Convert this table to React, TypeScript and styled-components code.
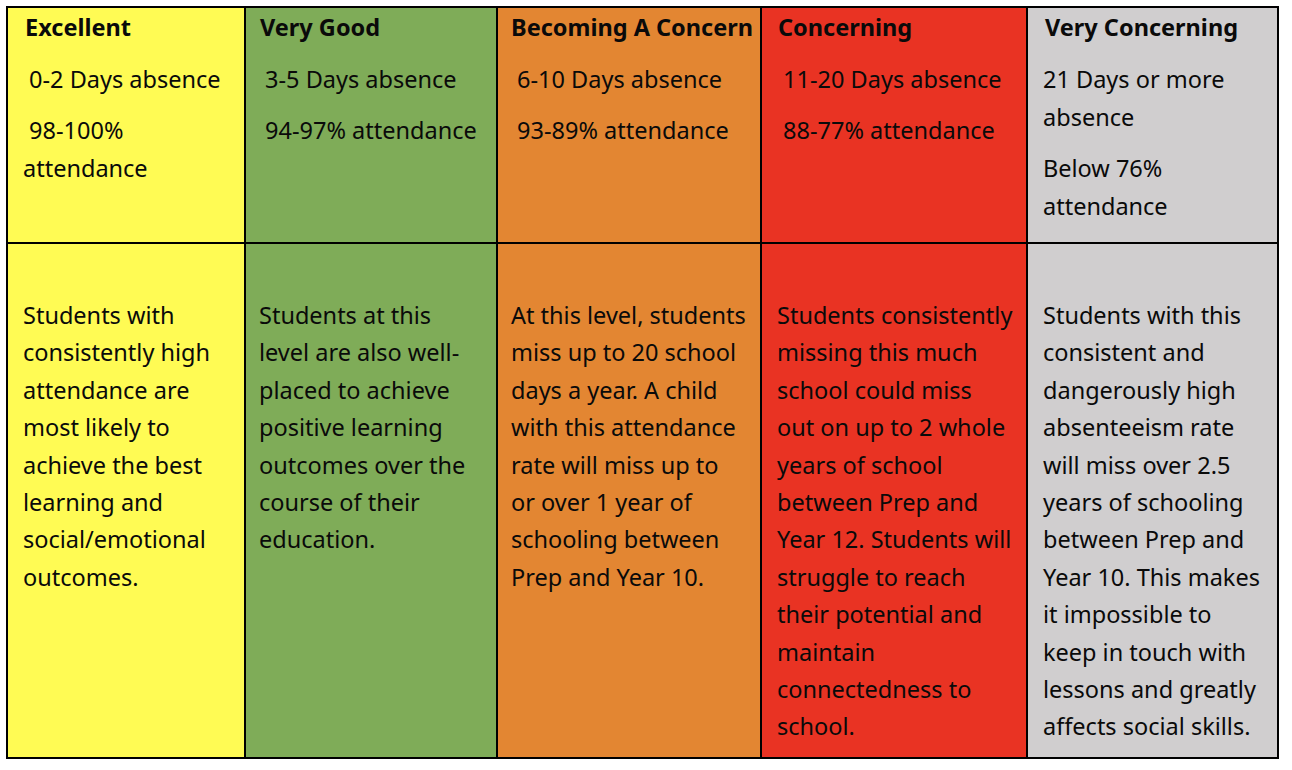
import React from "react";
import styled, { createGlobalStyle } from "styled-components";

const GlobalStyle = createGlobalStyle`
  html, body { margin: 0; padding: 0; background: #ffffff; }
  body { font-family: "Noto Sans", "Open Sans", sans-serif; color: #000; }
`;

const Page = styled.div`
  padding: 6px 0 0 6px;
`;

const Grid = styled.div`
  display: grid;
  grid-template-columns: 236px 250px 262px 264px 249px;
  grid-template-rows: 234px 513px;
  gap: 2px;
  padding: 2px;
  background: #000;
  width: max-content;
`;

const Cell = styled.div<{ $bg: string; $pad: number; $right: number; $top: number; $lh: number }>`
  background: ${(p) => p.$bg};
  padding: ${(p) => p.$top}px ${(p) => p.$right}px 0 ${(p) => p.$pad}px;
  font-size: 23.5px;
  line-height: ${(p) => p.$lh}px;
  color: #0a0a0a;
`;

const Heading = styled.div<{ $indent: number }>`
  font-weight: 700;
  padding-left: ${(p) => p.$indent}px;
  white-space: nowrap;
`;

const Para = styled.p`
  margin: 13.5px 0 0 0;
`;

const Body = styled.p`
  margin: 0;
`;

type Level = {
  title: string;
  bg: string;
  pad: number;
  right: number;
  indent: number;
  lines: string[];
  body: string;
};

const levels: Level[] = [
  {
    title: "Excellent",
    bg: "#fffb54",
    pad: 15,
    right: 4,
    indent: 2,
    lines: ["\u00a00-2 Days absence", "\u00a098-100% attendance"],
    body:
      "Students with consistently high attendance are most likely to achieve the best learning and social/emotional outcomes.",
  },
  {
    title: "Very Good",
    bg: "#7fac58",
    pad: 13,
    right: 17,
    indent: 1,
    lines: ["\u00a03-5 Days absence", "\u00a094-97% attendance"],
    body:
      "Students at this level are also well-placed to achieve positive learning outcomes over the course of their education.",
  },
  {
    title: "Becoming A Concern",
    bg: "#e38632",
    pad: 13,
    right: 13,
    indent: 0,
    lines: ["\u00a06-10 Days absence", "\u00a093-89% attendance"],
    body:
      "At this level, students miss up to 20 school days a year. A child with this attendance rate will miss up to or over 1 year of schooling between Prep and Year 10.",
  },
  {
    title: "Concerning",
    bg: "#e93323",
    pad: 15,
    right: 12.5,
    indent: 1,
    lines: ["\u00a011-20 Days absence", "\u00a088-77% attendance"],
    body:
      "Students consistently missing this much school could miss out on up to 2 whole years of school between Prep and Year 12. Students will struggle to reach their potential and maintain connectedness to school.",
  },
  {
    title: "Very Concerning",
    bg: "#d0cecf",
    pad: 15,
    right: 12,
    indent: 2,
    lines: ["21 Days or more absence", "Below 76% attendance"],
    body:
      "Students with this consistent and dangerously high absenteeism rate will miss over 2.5 years of schooling between Prep and Year 10. This makes it impossible to keep in touch with lessons and greatly affects social skills.",
  },
];

export default function App() {
  return (
    <>
      <GlobalStyle />
      <Page>
        <Grid>
          {levels.map((l) => (
            <Cell
              key={l.title + "-h"}
              $bg={l.bg}
              $pad={l.pad}
              $right={l.right}
              $top={0}
              $lh={38}
            >
              <Heading $indent={l.indent}>{l.title}</Heading>
              {l.lines.map((t) => (
                <Para key={t}>{t}</Para>
              ))}
            </Cell>
          ))}
          {levels.map((l) => (
            <Cell
              key={l.title + "-b"}
              $bg={l.bg}
              $pad={l.pad}
              $right={l.right}
              $top={53}
              $lh={37.4}
            >
              <Body>{l.body}</Body>
            </Cell>
          ))}
        </Grid>
      </Page>
    </>
  );
}
